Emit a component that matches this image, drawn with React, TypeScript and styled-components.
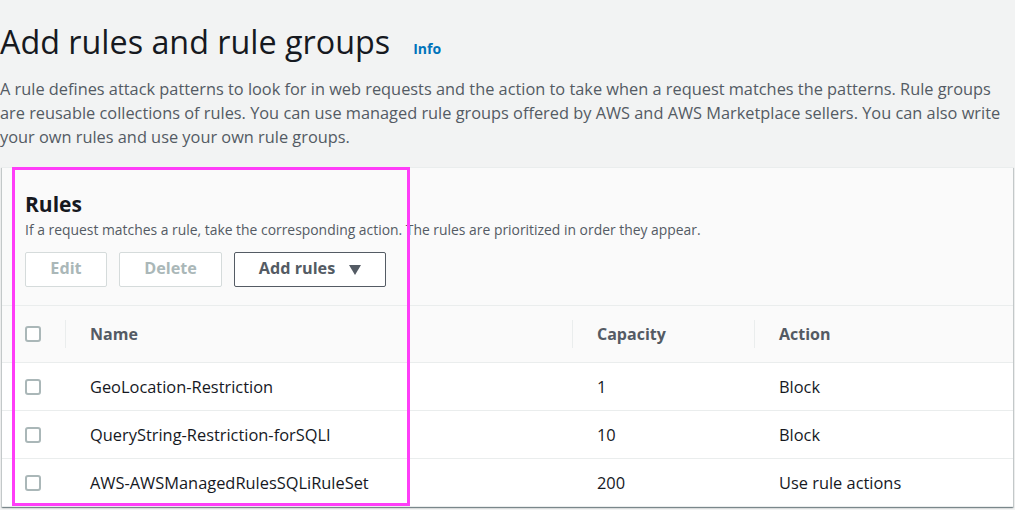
import React from "react";
import styled, { createGlobalStyle } from "styled-components";

const GlobalStyle = createGlobalStyle`
  html, body {
    margin: 0;
    padding: 0;
    background: #f2f3f3;
    font-family: "Open Sans", "Liberation Sans", Arial, sans-serif;
    color: #16191f;
  }
  * { box-sizing: border-box; }
`;

const Page = styled.div`
  position: relative;
  width: 1015px;
  height: 510px;
  overflow: hidden;
  padding-top: 21px;
`;

const TitleRow = styled.div`
  display: flex;
  align-items: baseline;
  gap: 23px;
`;

const Title = styled.h1`
  margin: 0;
  font-size: 32.3px;
  line-height: 40px;
  font-weight: 400;
  color: #16191f;
`;

const InfoLink = styled.a`
  font-size: 14px;
  font-weight: 700;
  color: #0073bb;
  text-decoration: none;
`;

const Description = styled.p`
  margin: 16px 0 0 0;
  font-size: 16.35px;
  line-height: 24px;
  color: #545b64;
  white-space: nowrap;
`;

const Panel = styled.section`
  margin: 18px 0 0 2px;
  width: 1011px;
  background: #fafafa;
  box-shadow: 0 1px 1px 0 rgba(0, 28, 36, 0.3), 1px 1px 1px 0 rgba(0, 28, 36, 0.15),
    -1px 1px 1px 0 rgba(0, 28, 36, 0.15);
  border-top: 1px solid #eaeded;
`;

const PanelHeader = styled.div`
  padding: 22px 23px 18px;
`;

const PanelTitle = styled.h2`
  margin: 0;
  font-size: 21px;
  line-height: 28px;
  font-weight: 700;
  color: #16191f;
`;

const PanelSub = styled.p`
  margin: 2px 0 0 0;
  font-size: 13.9px;
  line-height: 20px;
  color: #545b64;
`;

const Actions = styled.div`
  display: flex;
  gap: 12px;
  margin-top: 12px;
`;

const Button = styled.button<{ $disabled?: boolean; $width: number }>`
  display: inline-flex;
  align-items: center;
  justify-content: center;
  gap: 14px;
  height: 35px;
  width: ${(p) => p.$width}px;
  padding: 0 0 3px 0;
  border-radius: 2px;
  border: 1px solid ${(p) => (p.$disabled ? "#d5dbdb" : "#545b64")};
  background: #ffffff;
  color: ${(p) => (p.$disabled ? "#aab7b8" : "#545b64")};
  font-family: inherit;
  font-size: 16.2px;
  font-weight: 700;
  cursor: ${(p) => (p.$disabled ? "default" : "pointer")};

  svg {
    margin-top: 3px;
  }
`;

const Table = styled.div`
  display: grid;
  grid-template-columns: 63px 507px 182px 1fr;
`;

const HeadCell = styled.div`
  display: flex;
  align-items: center;
  height: 58px;
  background: #fafafa;
  border-top: 1px solid #eaeded;
  border-bottom: 1px solid #eaeded;
  font-size: 16px;
  font-weight: 700;
  color: #545b64;
`;

const Sep = styled.span`
  width: 1px;
  height: 28px;
  background: #eaeded;
  margin-right: 24px;
`;

const Cell = styled.div`
  display: flex;
  align-items: center;
  height: 48px;
  padding-left: 25px;
  background: #ffffff;
  border-bottom: 1px solid #eaeded;
  font-size: 16.4px;
  color: #16191f;
`;

const CheckCell = styled.div<{ $head?: boolean }>`
  display: flex;
  align-items: center;
  padding-left: 23px;
  height: ${(p) => (p.$head ? 58 : 48)}px;
  background: ${(p) => (p.$head ? "#fafafa" : "#ffffff")};
  border-bottom: 1px solid #eaeded;
  border-top: ${(p) => (p.$head ? "1px solid #eaeded" : "none")};
`;

const Checkbox = styled.span`
  display: block;
  width: 16px;
  height: 16px;
  border: 2px solid #aab7b8;
  border-radius: 3px;
  background: #ffffff;
`;

const Highlight = styled.div`
  position: absolute;
  left: 12px;
  top: 167px;
  width: 398px;
  height: 339px;
  border: 3px solid #ff3df8;
  pointer-events: none;
`;

const Caret = () => (
  <svg width="12" height="10" viewBox="0 0 12 10">
    <polygon points="0,0 12,0 6,10" fill="#545b64" />
  </svg>
);

const rows = [
  { name: "GeoLocation-Restriction", capacity: "1", action: "Block" },
  { name: "QueryString-Restriction-forSQLI", capacity: "10", action: "Block" },
  { name: "AWS-AWSManagedRulesSQLiRuleSet", capacity: "200", action: "Use rule actions" },
];

export default function App() {
  return (
    <>
      <GlobalStyle />
      <Page>
        <TitleRow>
          <Title>Add rules and rule groups</Title>
          <InfoLink href="#">Info</InfoLink>
        </TitleRow>
        <Description>
          A rule defines attack patterns to look for in web requests and the action to take when a request matches the patterns. Rule groups
          <br />
          are reusable collections of rules. You can use managed rule groups offered by AWS and AWS Marketplace sellers. You can also write
          <br />
          your own rules and use your own rule groups.
        </Description>
        <Panel>
          <PanelHeader>
            <PanelTitle>Rules</PanelTitle>
            <PanelSub>
              If a request matches a rule, take the corresponding action. The rules are prioritized in order they appear.
            </PanelSub>
            <Actions>
              <Button $disabled $width={82}>Edit</Button>
              <Button $disabled $width={103}>Delete</Button>
              <Button $width={152}>
                Add rules
                <Caret />
              </Button>
            </Actions>
          </PanelHeader>
          <Table>
            <CheckCell $head>
              <Checkbox />
            </CheckCell>
            <HeadCell>
              <Sep />
              Name
            </HeadCell>
            <HeadCell>
              <Sep />
              Capacity
            </HeadCell>
            <HeadCell>
              <Sep />
              Action
            </HeadCell>
            {rows.map((r) => (
              <React.Fragment key={r.name}>
                <CheckCell>
                  <Checkbox />
                </CheckCell>
                <Cell>{r.name}</Cell>
                <Cell>{r.capacity}</Cell>
                <Cell>{r.action}</Cell>
              </React.Fragment>
            ))}
          </Table>
        </Panel>
        <Highlight />
      </Page>
    </>
  );
}
